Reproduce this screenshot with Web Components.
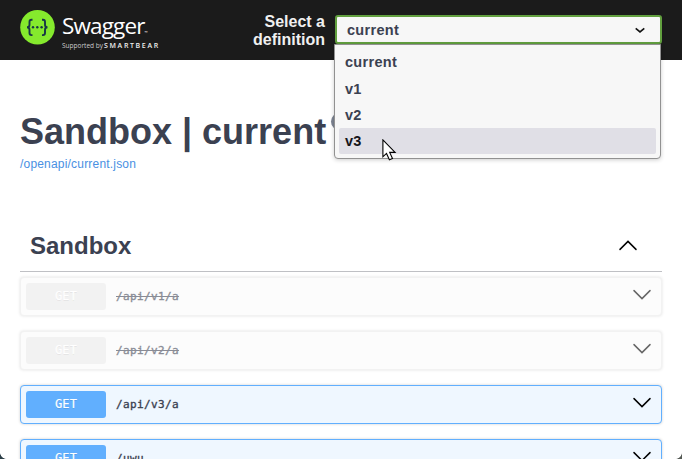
<!DOCTYPE html>
<html lang="en"><head><meta charset="utf-8"><title>Swagger UI</title>
<style>
html,body{margin:0;height:100%;overflow:hidden;background:#fff}
body{font-family:"Liberation Sans",Arial,sans-serif;color:#3b4151}
</style></head><body>
<sandbox-app></sandbox-app>
<script>
const define=(name,html)=>customElements.define(name,class extends HTMLElement{
  connectedCallback(){
    if(this.shadowRoot)return;
    const t=document.createElement('template');t.innerHTML=html;
    this.attachShadow({mode:'open'}).append(t.content.cloneNode(true));
  }
});
define('chevron-icon',`<style>:host{display:block;width:20px;height:20px;color:#000}svg{display:block}:host([up]) svg{transform:rotate(180deg)}</style>
<svg width="20" height="20" viewBox="0 0 20 20"><path d="M2 5.6 10 13.6 18 5.6" fill="none" stroke="currentColor" stroke-width="1.5" stroke-linecap="round"/></svg>`);
define('swagger-logo',`<style>:host{display:flex;width:142px;height:50px;color:#fff}
svg{flex:none;width:35px;height:35px;margin-top:10px}
.w{margin:13px 0 0 7px;font-family:"Open Sans","Noto Sans",sans-serif;white-space:nowrap}
.n{font-size:22.5px;line-height:26px;height:29px;font-weight:400;letter-spacing:-.85px}
.n small{font-size:4px;letter-spacing:0;line-height:4px}
.s{font-size:6.5px;line-height:8px;display:flex;gap:3px;color:#ccc}
.s b{font-size:7px;letter-spacing:1.65px;font-weight:600;color:#eee}.s span{width:39px}</style>
<svg viewBox="0 0 35 35"><circle cx="17.5" cy="17.3" r="17.3" fill="#85ea2d"/><g fill="none" stroke="#173647" stroke-width="1.9"><path d="M12.5 9.7h-1q-2 0-2 2v3.1q0 2.5-2.5 2.5 2.5 0 2.5 2.5v3.3q0 2 2 2h1M22 9.7h1q2 0 2 2v3.1q0 2.5 2.5 2.5-2.5 0-2.5 2.5v3.3q0 2-2 2h-1"/></g><g fill="#173647"><circle cx="13" cy="17.3" r="1.2"/><circle cx="17.3" cy="17.3" r="1.2"/><circle cx="21.6" cy="17.3" r="1.2"/></g></svg>
<div class="w"><div class="n">Swagger<small>™</small></div><div class="s"><span>Supported by</span><b>SMARTBEAR</b></div></div>`);
define('option-item',`<style>:host{display:flex;align-items:center;height:26px;padding-left:6px;border-radius:2px}:host([active]){background:#e0dfe6;color:#15141a}</style><slot></slot>`);
define('definition-select',`<style>:host{display:block;position:relative;width:327px;height:29px;font-size:14.5px;font-weight:700;letter-spacing:.3px}
.box{box-sizing:border-box;display:flex;align-items:center;justify-content:space-between;height:29px;border:2px solid #62a03f;border-radius:3px;background:#f7f7f7;padding:0 14px 0 10px}
.menu{position:absolute;z-index:2;left:-1px;top:29px;width:327px;height:115px;box-sizing:border-box;border:1px solid #919191;border-radius:0 0 4px 4px;background:#f7f7f7;padding:5px 4px;box-shadow:0 1px 4px #0003}
option-item:first-child{height:24px;margin-bottom:2px}
svg{display:block}
.cur{position:absolute;left:47px;top:94px}</style>
<div class="box"><span>current</span><svg width="12" height="12" viewBox="0 0 12 12"><path d="M1.7 4.3 6 7.9 10.3 4.3" fill="none" stroke="#111" stroke-width="1.6"/></svg></div>
<div class="menu"><option-item>current</option-item><option-item>v1</option-item><option-item>v2</option-item><option-item active>v3</option-item>
<svg class="cur" width="15" height="22" viewBox="0 0 15 22"><path d="M.9.9V17.8L4.5 14.4 7.4 20.8 10.5 19.4 7.7 13.4H13.1Z" fill="#fff" stroke="#000" stroke-width="1.1"/></svg></div>`);
define('top-bar',`<style>:host{display:flex;box-sizing:border-box;height:60px;background:#1b1b1b;padding:0 20px}
.l{flex:1;text-align:right;color:#f0f0f0;font-size:16px;line-height:18px;font-weight:700;margin:13px 10px 0 0}
definition-select{margin-top:15px}</style>
<swagger-logo></swagger-logo><div class="l">Select a<br>definition</div><definition-select></definition-select>`);
define('api-info',`<style>:host{display:block;box-sizing:border-box;height:151px;padding:51px 20px 0}
h2{display:flex;margin:0;font-size:36px;line-height:42px;white-space:nowrap}
.v{width:60px;height:17px;border-radius:9px;background:#7d8492;margin:2px 0 0 5px}
a{display:block;color:#4990e2;font-size:12px;line-height:14px;margin-top:4px;letter-spacing:.19px}</style>
<h2><slot></slot><span class="v"></span></h2><a>/openapi/current.json</a>`);
define('operation-row',`<style>:host{display:flex;align-items:center;box-sizing:border-box;height:39px;margin-bottom:15px;padding:5px 9px 5px 5px;border:1px solid #61affe;border-radius:4px;background:#eff7ff;box-shadow:0 0 3px rgba(0,0,0,.19);font-family:"DejaVu Sans Mono",monospace;font-size:12px}
.m{width:80px;height:27px;line-height:26px;text-align:center;border-radius:3px;background:#61affe;color:#fff;text-shadow:0 1px 0 #0000001a;letter-spacing:.1px;-webkit-text-stroke:.15px}
.p{flex:1;padding-left:10px;font-size:11px;letter-spacing:.38px;color:#3b4151;-webkit-text-stroke:.35px}
chevron-icon{margin-top:-4px}
:host([deprecated]){opacity:.6;border-color:#ebebeb;background:#fbfbfb}
:host([deprecated]) .m{background:#ebebeb}
:host([deprecated]) .p{text-decoration:line-through}</style>
<span class="m">GET</span><span class="p"><slot></slot></span><chevron-icon></chevron-icon>`);
define('api-section',`<style>:host{display:block;padding:0 20px}
header{display:flex;justify-content:space-between;align-items:center;box-sizing:border-box;height:52px;padding:0 24px 0 10px;border-bottom:1px solid #bfc0c4;margin-bottom:5px}
h3{margin:0;font-size:24px}chevron-icon{margin-bottom:2px}</style>
<header><h3>Sandbox</h3><chevron-icon up></chevron-icon></header><slot></slot>`);
define('window-corner',`<style>:host{position:absolute;bottom:0;width:7px;height:7px}:host([l]){left:0;background:radial-gradient(circle at 100% 0,#0000 6.6px,#2d3f48 7.4px)}:host([r]){right:0;background:radial-gradient(circle at 0 0,#0000 6.6px,#555a55 7.4px)}</style>`);
define('sandbox-app',`<style>:host{display:block;position:relative;height:100vh;overflow:hidden}api-section{margin-top:9px}</style>
<top-bar></top-bar><api-info>Sandbox | current</api-info>
<api-section><operation-row deprecated>/api/v1/a</operation-row><operation-row deprecated>/api/v2/a</operation-row><operation-row>/api/v3/a</operation-row><operation-row>/uwu</operation-row></api-section><window-corner l></window-corner><window-corner r></window-corner>`);
</script></body></html>
